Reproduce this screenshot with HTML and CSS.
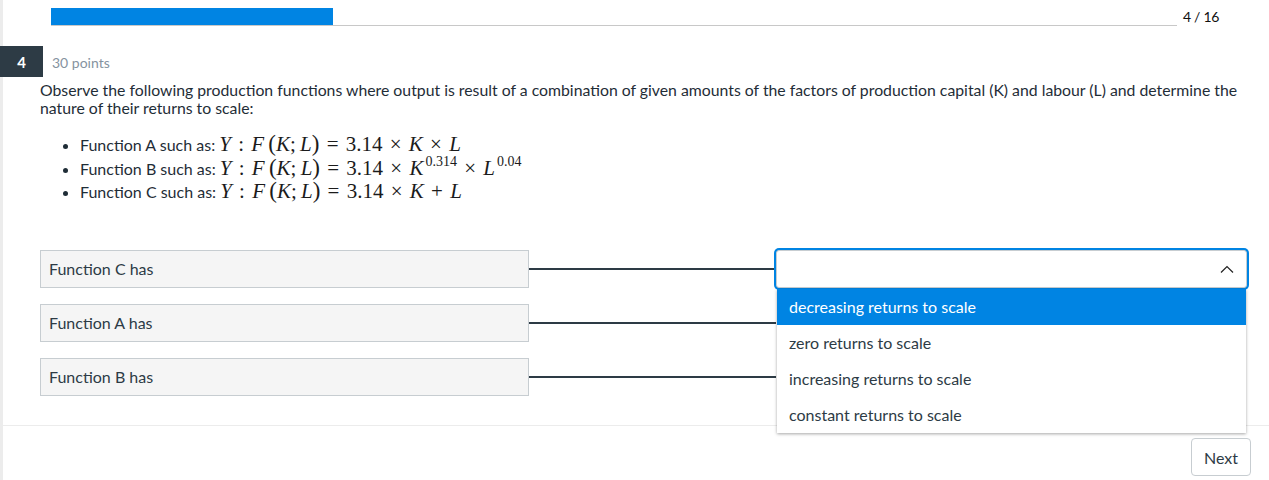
FILE: index.html
```html
<!DOCTYPE html>
<html lang="en">
<head>
<meta charset="utf-8">
<title>Quiz question 4</title>
<link rel="stylesheet" href="styles.css">
</head>
<body>
<div class="page">
  <div class="progress-row">
    <div class="track"><div class="fill" style="width:25%"></div></div>
    <div class="count">4 / 16</div>
  </div>

  <div class="q-head">
    <div class="badge">4</div>
    <div class="points">30 points</div>
  </div>

  <div class="q-body">
    <p class="q-text">Observe the following production functions where output is result of a combination of given amounts of the factors of production capital (K) and labour (L) and determine the nature of their returns to scale:</p>
    <ul class="funcs">
      <li>Function A such as: <span class="math"><i>Y</i> <span class="op">:</span> <i>F</i>&#8201;<span class="par">(</span><i>K</i>;&#8201;<i>L</i><span class="par">)</span> <span class="op">=</span> 3.14 <span class="op">×</span> <i>K</i> <span class="op">×</span> <i>L</i></span></li>
      <li>Function B such as: <span class="math"><i>Y</i> <span class="op">:</span> <i>F</i>&#8201;<span class="par">(</span><i>K</i>;&#8201;<i>L</i><span class="par">)</span> <span class="op">=</span> 3.14 <span class="op">×</span> <i>K</i><sup>0.314</sup> <span class="op">×</span> <i>L</i><sup>0.04</sup></span></li>
      <li>Function C such as: <span class="math"><i>Y</i> <span class="op">:</span> <i>F</i>&#8201;<span class="par">(</span><i>K</i>;&#8201;<i>L</i><span class="par">)</span> <span class="op">=</span> 3.14 <span class="op">×</span> <i>K</i> <span class="op">+</span> <i>L</i></span></li>
    </ul>

    <div class="matches">
      <div class="match-row">
        <div class="prompt">Function C has</div>
        <div class="connector"></div>
        <div class="select-wrap">
          <div class="select open">
            <span class="sel-value"></span>
            <svg class="chev" width="14" height="8" viewBox="0 0 14 8"><path d="M1 7.5 L7 1.5 L13 7.5" fill="none" stroke="#222" stroke-width="1.2"/></svg>
          </div>
          <ul class="menu">
            <li class="opt active">decreasing returns to scale</li>
            <li class="opt">zero returns to scale</li>
            <li class="opt">increasing returns to scale</li>
            <li class="opt">constant returns to scale</li>
          </ul>
        </div>
      </div>
      <div class="match-row">
        <div class="prompt">Function A has</div>
        <div class="connector"></div>
        <div class="select-wrap"></div>
      </div>
      <div class="match-row">
        <div class="prompt">Function B has</div>
        <div class="connector"></div>
        <div class="select-wrap"></div>
      </div>
    </div>
  </div>

  <div class="footer">
    <button class="next">Next</button>
  </div>
</div>
</body>
</html>
```

FILE: styles.css
```css
* { box-sizing: border-box; }
html, body { margin: 0; padding: 0; background: #fff; }
body {
  font-family: Lato, "Liberation Sans", sans-serif;
  color: #2d3b45;
  width: 1269px;
  height: 480px;
  overflow: hidden;
}
.page {
  width: 1269px;
  height: 480px;
  border-left: 3px solid #ececec;
  position: relative;
}
.progress-row {
  display: flex;
  align-items: flex-end;
  padding: 8px 50px 0 48px;
  height: 26px;
}
.track {
  flex: 1;
  height: 18px;
  border-bottom: 1px solid #c8c8c8;
}
.fill {
  height: 17px;
  background: #0084e3;
}
.count {
  font-size: 14px;
  color: #111;
  margin-left: 6px;
  width: 36px;
  line-height: 16px;
  position: relative;
  top: -1px;
  white-space: nowrap;
  letter-spacing: -0.3px;
}
.q-head {
  display: flex;
  align-items: center;
  margin-top: 20px;
  margin-left: -3px;
  height: 31px;
}
.badge {
  width: 43px;
  height: 31px;
  background: #2d3b45;
  color: #fff;
  font-size: 15px;
  font-weight: 700;
  display: flex;
  align-items: center;
  justify-content: center;
}
.points {
  margin-left: 9px;
  font-size: 14px;
  color: #8593a0;
  position: relative;
  top: 1px;
}
.q-body {
  padding: 0 20px 0 37px;
}
.q-text {
  margin: 4px 0 0;
  font-size: 15.8px;
  line-height: 18px;
  color: #1f2d37;
}
.funcs {
  margin: 15px 0 0;
  padding-left: 40px;
  font-size: 16px;
  list-style: disc;
  color: #1f2d37;
}
.funcs li {
  line-height: 23.5px;
  height: 23.5px;
}
.math {
  font-family: "Liberation Serif", "DejaVu Serif", serif;
  font-size: 21px;
  color: #1b1b1b;
  white-space: nowrap;
}
.math i { font-style: italic; }
.math .op { margin: 0 2px; }
.math .par { font-size: 23px; }
.math sup {
  font-size: 14px;
  vertical-align: baseline;
  position: relative;
  top: -9px;
  margin-left: 2px;
}
.matches {
  margin-top: 47px;
  display: flex;
  flex-direction: column;
  gap: 16px;
}
.match-row {
  display: flex;
  align-items: center;
  height: 38px;
}
.prompt {
  flex: 0 0 489px;
  height: 38px;
  background: #f5f5f5;
  border: 1px solid #c7cdd1;
  font-size: 16px;
  padding: 0 8px;
  display: flex;
  align-items: center;
}
.connector {
  flex: 0 0 247px;
  height: 2px;
  background: #2d3b45;
}
.select-wrap {
  flex: 0 0 471px;
  position: relative;
  height: 38px;
}
.select {
  height: 38px;
  border: 1px solid #c7cdd1;
  border-radius: 3px;
  background: #fff;
  box-shadow: 0 0 0 2px #0084e3;
  display: flex;
  align-items: center;
  justify-content: flex-end;
  padding-right: 12px;
}
.menu {
  position: absolute;
  left: 1px;
  right: 1px;
  top: 39px;
  margin: 0;
  padding: 0;
  list-style: none;
  background: #fff;
  box-shadow: 0 1px 3px rgba(0,0,0,0.35);
  z-index: 5;
}
.opt {
  height: 36px;
  line-height: 36px;
  padding-left: 12px;
  font-size: 16px;
  color: #2d3b45;
}
.opt.active {
  background: #0084e3;
  color: #fff;
}
.footer {
  position: absolute;
  left: 0;
  right: 0;
  top: 425px;
  border-top: 1px solid #ececec;
  display: flex;
  justify-content: flex-end;
  padding: 12px 18px 0 0;
}
.next {
  width: 60px;
  height: 38px;
  border: 1px solid #c7cdd1;
  border-radius: 4px;
  background: #fff;
  font-family: Lato, "Liberation Sans", sans-serif;
  font-size: 16px;
  color: #2d3b45;
  padding: 0;
}
```
